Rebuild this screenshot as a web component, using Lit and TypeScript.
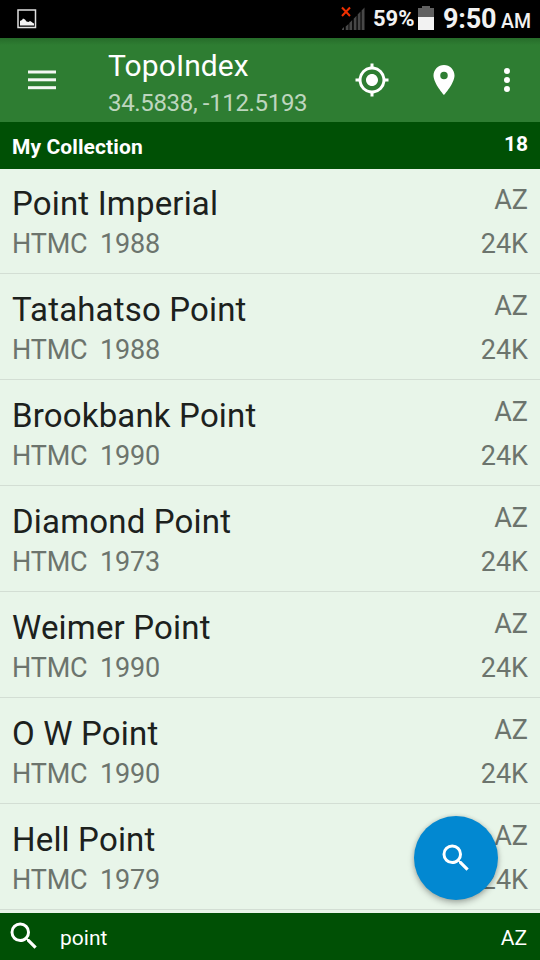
import { LitElement, html, css, svg } from "lit";
import { customElement, property } from "lit/decorators.js";

interface Quad {
  name: string;
  year: number;
}

const QUADS: Quad[] = [
  { name: "Point Imperial", year: 1988 },
  { name: "Tatahatso Point", year: 1988 },
  { name: "Brookbank Point", year: 1990 },
  { name: "Diamond Point", year: 1973 },
  { name: "Weimer Point", year: 1990 },
  { name: "O W Point", year: 1990 },
  { name: "Hell Point", year: 1979 },
];

const SEARCH = svg`<path fill="#fff" d="M15.5 14h-.79l-.28-.27A6.471 6.471 0 0 0 16 9.500 6.500 6.500 0 1 0 9.500 16c1.610 0 3.090-.59 4.230-1.570l.27.28v.79l5 4.990L20.490 19l-4.990-5zm-6 0C7.010 14 5 11.990 5 9.500S7.010 5 9.500 5 14 7.010 14 9.500 11.990 14 9.500 14z"/>`;

@customElement("status-bar")
export class StatusBar extends LitElement {
  static styles = css`
    :host { display: flex; height: 38px; background: #000; color: #f2f2f2; font-weight: 700; white-space: nowrap; }
    svg { display: block; flex: none; }
    .shot { margin: 9px 0 0 17px; }
    .signal { margin: 6px 0 0 auto; }
    .pct { margin-left: 8px; width: 44px; font-size: 22px; line-height: 38px; }
    .battery { margin: 6px 0 0 1px; }
    .time { margin-left: 9px; width: 53px; font-size: 27px; line-height: 39px; letter-spacing: -.2px; }
    .ampm { margin-left: 5px; width: 30px; margin-right: 9px; font-size: 19.500px; line-height: 44px; font-weight: 500; }
  `;
  render() {
    return html`
      <svg class="shot" width="20" height="20">
        <rect x="1" y="1" width="17.500" height="17.500" fill="none" stroke="#e0e0e0" stroke-width="1.500" />
        <path fill="#f2f2f2" d="M3 16.500v-4.500l2-1 1-1.500 2 1 1.500 2 2 .5 1.500-1 1 .5 2 1.500 1 .5v2z" />
      </svg>
      <svg class="signal" width="24" height="25">
        <path d="M1 1.500l8 8.500M9 1.500l-8 8.500" stroke="#f03000" stroke-width="2" />
        <path fill="#484848" d="M1 24v-1l2-2v3zM4.700 24v-3.500l2.800-2.500v6zM8.400 24v-7l2.800-3v10zM12.700 24V12.700l2.800-3V24zM16.700 24V8.500l2.800-3V24zM20.600 24V4.500l2.900-3V24z" />
      </svg>
      <span class="pct">59%</span>
      <svg class="battery" width="16" height="24">
        <path fill="#606060" d="M0 2h4V0h8v2h4v9H0z" />
        <rect y="11" width="16" height="13" fill="#f2f2f2" />
      </svg>
      <span class="time">9:50</span>
      <span class="ampm">AM</span>
    `;
  }
}

@customElement("app-toolbar")
export class AppToolbar extends LitElement {
  static styles = css`
    :host { display: flex; height: 84px; background: linear-gradient(#266c2a, #2e7d32 7px); color: #fff; white-space: nowrap; }
    svg { display: block; flex: none; }
    .menu { margin: 31px 0 0 28px; }
    .titles { margin-left: 52px; flex: 1; }
    .title { font-size: 30px; line-height: 36px; margin-top: 10px; letter-spacing: .1px; }
    .sub { font-size: 24px; line-height: 30px; margin-top: 4px; letter-spacing: -.34px; color: rgba(255, 255, 255, .7); }
    .locate { margin: 24px 36px 0 0; }
    .pin { margin: 24px 0 0; }
    .more { margin: 24px 15px 0 27px; }
  `;
  render() {
    return html`
      <svg class="menu" width="28" height="21" fill="#fff">
        <rect y="1.500" width="28" height="3" opacity=".95" />
        <rect y="9.300" width="28" height="3" opacity=".95" />
        <rect y="17.200" width="28" height="3" opacity=".95" />
      </svg>
      <div class="titles">
        <div class="title">TopoIndex</div>
        <div class="sub">34.5838, -112.5193</div>
      </div>
      <svg class="locate" width="36" height="36" viewBox="0 0 24 24" fill="#fff">
        <path d="M12 8c-2.210 0-4 1.790-4 4s1.790 4 4 4 4-1.790 4-4-1.790-4-4-4zm8.940 3A8.994 8.994 0 0 0 13 3.060V1h-2v2.060A8.994 8.994 0 0 0 3.060 11H1v2h2.060A8.994 8.994 0 0 0 11 20.940V23h2v-2.060A8.994 8.994 0 0 0 20.940 13H23v-2h-2.060zM12 19c-3.870 0-7-3.130-7-7s3.130-7 7-7 7 3.130 7 7-3.130 7-7 7z" />
      </svg>
      <svg class="pin" width="36" height="36" viewBox="0 0 24 24" fill="#fff">
        <path d="M12 2C8.130 2 5 5.130 5 9c0 5.250 7 13 7 13s7-7.750 7-13c0-3.870-3.130-7-7-7zm0 9.500a2.500 2.500 0 0 1 0-5 2.500 2.500 0 0 1 0 5z" />
      </svg>
      <svg class="more" width="36" height="36" viewBox="0 0 24 24" fill="#fff">
        <circle cx="12" cy="6" r="2" /><circle cx="12" cy="12" r="2" /><circle cx="12" cy="18" r="2" />
      </svg>
    `;
  }
}

@customElement("quad-row")
export class QuadRow extends LitElement {
  @property({ attribute: false }) quad!: Quad;
  static styles = css`
    :host { display: flex; justify-content: space-between; box-sizing: border-box; flex: none; height: 106px; padding: 0 12px; border-bottom: 1px solid #d3ded4; color: #6c746d; font-size: 27px; line-height: 36px; white-space: nowrap; }
    .name { color: #1c211d; font-size: 33px; line-height: 40px; margin: 16px 0 2px; letter-spacing: .17px; }
    .meta { white-space: pre; letter-spacing: -.15px; word-spacing: -.3px; }
    .end { text-align: right; }
    .state { margin: 14px 0 8px; }
  `;
  render() {
    return html`
      <div>
        <div class="name">${this.quad.name}</div>
        <div class="meta">HTMC  ${this.quad.year}</div>
      </div>
      <div class="end">
        <div class="state">AZ</div>
        <div>24K</div>
      </div>
    `;
  }
}

@customElement("app-root")
export class AppRoot extends LitElement {
  static styles = css`
    :host { display: flex; flex-direction: column; position: relative; width: 540px; height: 960px; overflow: hidden; background: #e8f5e9; font-family: Roboto, sans-serif; }
    .section { display: flex; flex: none; justify-content: space-between; position: relative; height: 47px; margin-bottom: -1px; padding: 0 12px; box-sizing: border-box; background: #005005; color: #fff; font-size: 21px; font-weight: 700; letter-spacing: .1px; line-height: 50px; z-index: 1; }
    .count { font-size: 21px; letter-spacing: 0; line-height: 44px; }
    .list { display: flex; flex: 1; min-height: 0; flex-direction: column; overflow: hidden; }
    .filter { display: flex; flex: none; height: 47px; background: #005005; color: #fff; font-size: 21px; line-height: 50px; padding-right: 13px; }
    .filter svg { margin: 5px 0 0 6px; }
    .query { flex: 1; margin-left: 18px; }
    .fab { position: absolute; left: 414px; top: 816px; width: 84px; height: 84px; border-radius: 50%; background: #0288d1; box-shadow: 0 3px 6px rgba(0, 0, 0, .28), 0 0 4px rgba(0, 0, 0, .12); display: flex; align-items: center; justify-content: center; z-index: 2; }
  `;
  render() {
    return html`
      <status-bar></status-bar>
      <app-toolbar></app-toolbar>
      <div class="section"><span>My Collection</span><span class="count">18</span></div>
      <div class="list">${QUADS.map((q) => html`<quad-row .quad=${q}></quad-row>`)}</div>
      <div class="filter">
        <svg width="36" height="36" viewBox="0 0 24 24">${SEARCH}</svg>
        <span class="query">point</span>
        <span>AZ</span>
      </div>
      <div class="fab"><svg width="36" height="36" viewBox="0 0 24 24">${SEARCH}</svg></div>
    `;
  }
}
